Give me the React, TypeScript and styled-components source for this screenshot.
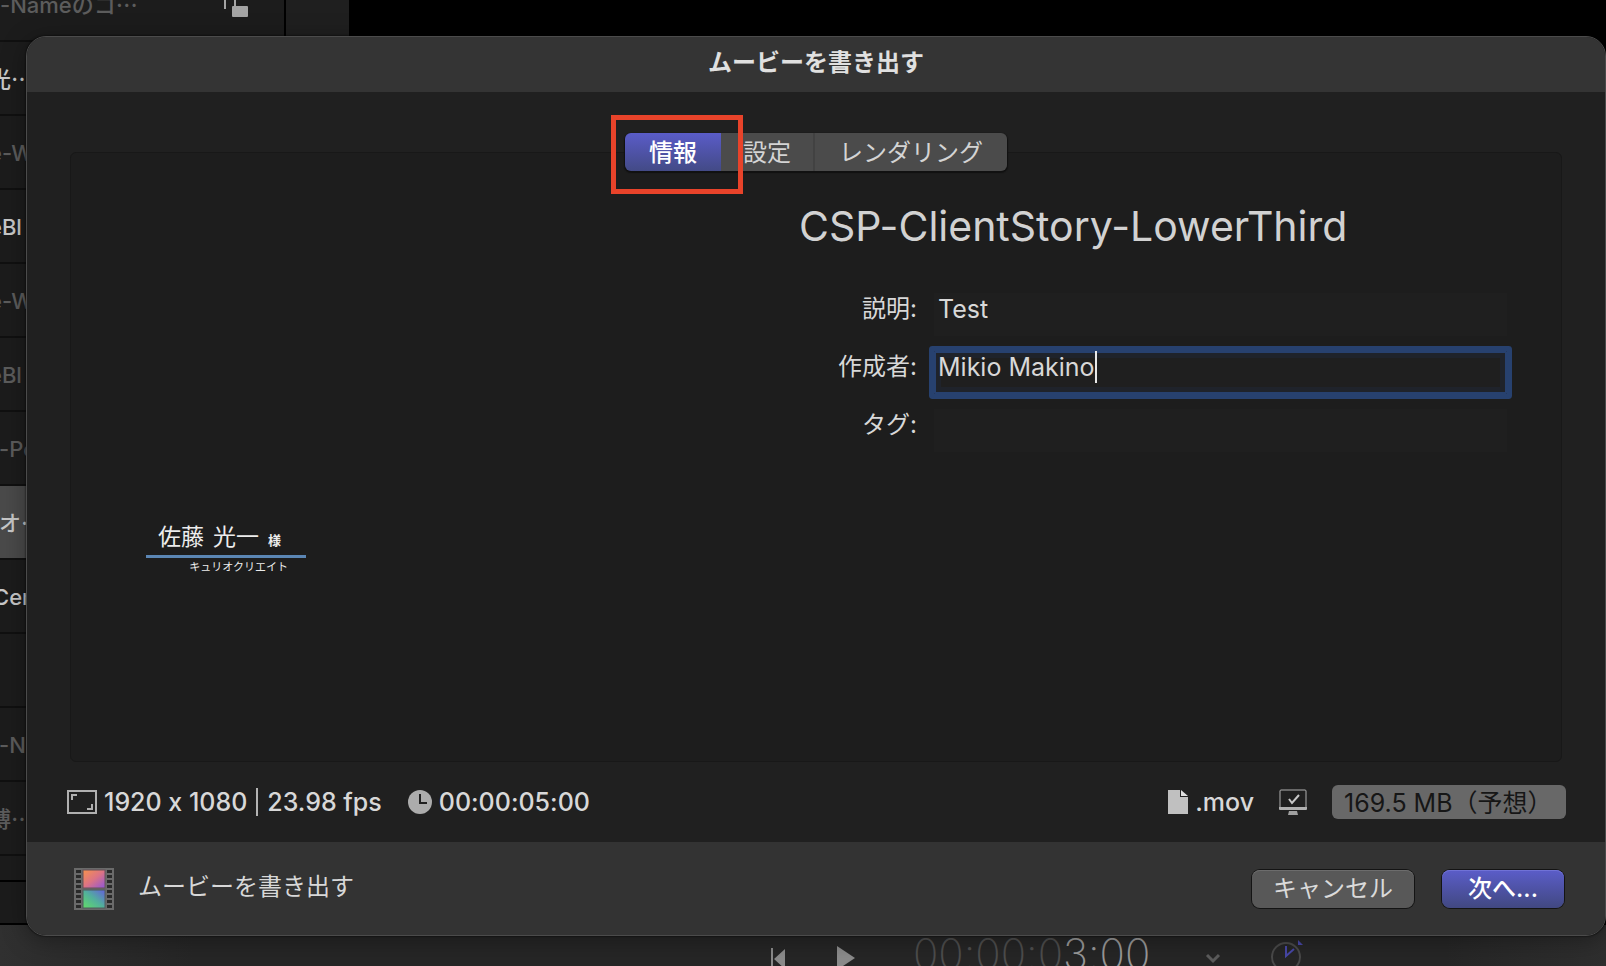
import React from "react";
import styled, { createGlobalStyle, css } from "styled-components";

const GlobalStyle = createGlobalStyle`
  *, *::before, *::after { box-sizing: border-box; }
  body {
    margin: 0;
    background: #000;
    color: #d8d8d8;
    font-family: Inter, "Noto Sans CJK JP", sans-serif;
    font-feature-settings: "calt" 0;
    font-size: 24px;
    line-height: 32px;
  }
  button, input { font: inherit; color: inherit; }
`;

/* ---------- application behind the dialog ---------- */

const Screen = styled.div`
  position: relative;
  display: flex;
  flex-direction: column;
  height: 100vh;
  min-height: 936px;
  overflow: hidden;
`;

const Workspace = styled.div`
  display: flex;
  flex: 1;
  min-height: 0;
  overflow: hidden;
  border-bottom: 2px solid #000;
`;

const LayerList = styled.ul`
  width: 286px;
  margin: -32px 0 0;
  padding: 0;
  list-style: none;
  background: #1c1c1c;
  border-right: 2px solid #000;
  overflow: hidden;
`;

const LayerRow = styled.li<{ $tone: "dim" | "bright" | "selected"; $scroll?: number }>`
  display: flex;
  align-items: center;
  justify-content: space-between;
  height: 74px;
  padding: 2px 36px 0 0;
  border-bottom: 2px solid #101010;
  white-space: nowrap;
  font-size: 22px;
  font-weight: 500;
  color: ${(p) => (p.$tone === "dim" ? "#5c5c5c" : "#c8c8c8")};
  text-indent: -${(p) => p.$scroll ?? 0}px;
  ${(p) => p.$tone === "selected" && css`background: #4a4a4a;`}
`;

const ListFooter = styled.li`
  height: 26px;
  border-bottom: 2px solid #000;
`;

const Gutter = styled.div`
  width: 63px;
  background: #1f1f1f;
`;

const Transport = styled.div`
  display: flex;
  align-items: flex-start;
  flex: 0 0 41px;
  padding: 8px 0 0 770px;
  background: linear-gradient(90deg, #303030, #262626 12%, #262626 90%, #2e2e2e);
  overflow: hidden;
`;

const IconButton = styled.button<{ $gap: number }>`
  display: block;
  margin: 0 ${(p) => p.$gap}px 0 0;
  padding: 0;
  border: 0;
  background: none;
  line-height: 0;
`;

const Timecode = styled.output`
  width: 239px;
  margin-right: 53px;
  font-family: Inter, sans-serif;
  font-size: 42px;
  font-weight: 200;
  line-height: 42px;
  color: #9a9a9a;
  white-space: nowrap;
`;

const Faded = styled.span`
  color: #4e4e4e;
`;

/* ---------- dialog ---------- */

const Dialog = styled.section`
  position: absolute;
  top: 36px;
  left: 26px;
  right: 0;
  border: 1px solid #4b4b4b;
  border-radius: 20px;
  background: #202020;
  box-shadow: 0 0 2px #000, 0 4px 24px rgba(0, 0, 0, 0.35);
  overflow: hidden;
`;

const TitleBar = styled.header`
  display: flex;
  align-items: center;
  justify-content: center;
  height: 55px;
  padding-bottom: 3px;
  background: #343434;
`;

const Title = styled.h1`
  margin: 0;
  font-size: 24px;
  font-weight: 700;
  line-height: 32px;
  color: #e0e0e0;
`;

const Body = styled.div`
  padding: 41px 43px 0;
`;

const TabBar = styled.div`
  position: relative;
  z-index: 1;
  display: flex;
  width: fit-content;
  height: 38px;
  margin: 0 auto;
`;

const Tabs = styled.div`
  display: flex;
  border-radius: 6px;
  box-shadow: 0 1px 1px 1px #111;
  overflow: hidden;
`;

const Tab = styled.button<{ $active?: boolean }>`
  padding: 2px 24px 0;
  border: 0;
  background: ${(p) => (p.$active ? "linear-gradient(#5a5cc8, #434a86)" : "#4b4b4b")};
  color: ${(p) => (p.$active ? "#fff" : "#d4d4d4")};
  font-weight: ${(p) => (p.$active ? 500 : 400)};
  white-space: nowrap;
  &:nth-child(2) {
    padding: 2px 22px 0;
    border-right: 2px solid #424242;
  }
`;

const Marker = styled.div`
  position: absolute;
  top: -18px;
  left: -14px;
  width: 132px;
  height: 79px;
  border: 5px solid #e8432a;
  pointer-events: none;
`;

const Panel = styled.div`
  display: grid;
  grid-template-columns: minmax(0, 1fr) minmax(0, 1fr);
  gap: 20px;
  min-height: 610px;
  margin-top: -19px;
  padding-right: 54px;
  border: 1px solid #181818;
  border-radius: 6px;
  background: #1d1d1d;
`;

const Preview = styled.div`
  padding: 367px 0 0 75px;
`;

const LowerThird = styled.figure`
  width: 160px;
  margin: 0;
  font-family: "Noto Sans CJK JP", sans-serif;
  color: #ececec;
`;

const PersonName = styled.div`
  display: flex;
  align-items: baseline;
  gap: 9px;
  padding-left: 12px;
  border-bottom: 3px solid #5b86b4;
  font-size: 23px;
  line-height: 31px;
  white-space: nowrap;
`;

const Honorific = styled.small`
  font-size: 13px;
  font-weight: 700;
`;

const Company = styled.figcaption`
  padding-right: 18px;
  text-align: right;
  font-size: 11px;
  line-height: 16px;
`;

const Details = styled.form`
  padding-top: 47px;
`;

const ProjectName = styled.h2`
  margin: 0 0 41px;
  font-size: 41px;
  font-weight: 400;
  line-height: 52px;
  color: #d2d2d2;
  white-space: nowrap;
`;

const FieldRow = styled.div`
  display: grid;
  grid-template-columns: 118px minmax(0, 1fr);
  gap: 17px;
  margin-bottom: 15px;
`;

const FieldLabel = styled.label`
  text-align: right;
  white-space: nowrap;
`;

const FieldBox = styled.div<{ $focused?: boolean }>`
  display: flex;
  align-items: flex-start;
  height: 43px;
  padding-left: 4px;
  background: #1f1f1f;
  ${(p) =>
    p.$focused &&
    css`
      border-radius: 1px;
      box-shadow: 0 0 0 5px #27416f, inset 0 0 0 2px #27416f, inset 0 0 0 7px #1f232b;
    `}
`;

const TextInput = styled.input`
  field-sizing: content;
  min-width: 1px;
  height: 32px;
  padding: 0;
  border: 0;
  outline: 0;
  background: none;
  font-size: 25px;
`;

const Caret = styled.span`
  width: 2px;
  height: 32px;
  background: #e8e8e8;
`;

const StatusBar = styled.div`
  display: flex;
  align-items: center;
  justify-content: space-between;
  height: 80px;
  padding: 0 39px 0 40px;
  font-size: 25px;
  font-weight: 500;
  white-space: nowrap;
`;

const StatusGroup = styled.div<{ $gap: number }>`
  display: flex;
  align-items: center;
  gap: ${(p) => p.$gap}px;
`;

const Rule = styled.span`
  width: 2px;
  height: 28px;
  margin: 0 2px;
  background: #b4b4b4;
`;

const SizeBadge = styled.span`
  width: 234px;
  padding: 2px 0 0 12px;
  border-radius: 6px;
  background: #686868;
  color: #161616;
  font-weight: 400;
`;

const Footer = styled.footer`
  display: flex;
  align-items: center;
  height: 93px;
  padding: 1px 41px 0 47px;
  background: #333;
`;

const FooterLabel = styled.span`
  flex: 1;
  margin-left: 24px;
  padding-bottom: 4px;
`;

const PushButton = styled.button<{ $primary?: boolean }>`
  width: ${(p) => (p.$primary ? 122 : 162)}px;
  height: 38px;
  margin-left: ${(p) => (p.$primary ? 28 : 0)}px;
  padding: 0;
  border: 0;
  border-radius: 8px;
  background: ${(p) => (p.$primary ? "linear-gradient(#5b5dc9, #414881)" : "#585858")};
  box-shadow: 0 0 0 1px #141414, inset 0 1px ${(p) => (p.$primary ? "#7072d6" : "#6c6c6c")};
  color: ${(p) => (p.$primary ? "#fff" : "#dadada")};
  font-weight: ${(p) => (p.$primary ? 500 : 400)};
`;

/* ---------- icons ---------- */

const UnlockIcon = () => (
  <svg width="24" height="26" viewBox="0 0 24 26" aria-hidden="true">
    <path d="M1 17V5a5 5 0 0 1 10 0v10" fill="none" stroke="#a4a4a4" strokeWidth="2" />
    <rect x="8" y="14" width="16" height="11" rx="1" fill="#a4a4a4" />
  </svg>
);

const FrameIcon = () => (
  <svg width="30" height="24" viewBox="0 0 30 24" fill="none" stroke="#b0b0b0" strokeWidth="2" aria-hidden="true">
    <rect x="1" y="1" width="28" height="22" />
    <path d="M5 10V5h5M25 14v5h-5" />
  </svg>
);

const ClockIcon = () => (
  <svg width="24" height="24" viewBox="0 0 24 24" aria-hidden="true">
    <circle cx="12" cy="12" r="12" fill="#acacac" />
    <path d="M12 4v9h7" fill="none" stroke="#202020" strokeWidth="2" />
  </svg>
);

const FileIcon = () => (
  <svg width="20" height="24" viewBox="0 0 20 24" aria-hidden="true">
    <path d="M0 0h12v7h8v17H0z" fill="#c0c0c0" />
    <path d="M13 0l7 6h-7z" fill="#e0e0e0" />
  </svg>
);

const MonitorIcon = () => (
  <svg width="28" height="26" viewBox="0 0 28 26" aria-hidden="true">
    <path d="M1 20V2q0-1 1-1h24q1 0 1 1v18" fill="none" stroke="#b0b0b0" />
    <path d="M0 18h28v2q0 1-1 1H1q-1 0-1-1z" fill="#b0b0b0" />
    <path d="M10 22h8l1 4H9z" fill="#a0a0a0" />
    <path d="M10 10l3 4 7-8" fill="none" stroke="#c8c8c8" strokeWidth="2" />
  </svg>
);

const FilmIcon = () => (
  <svg width="40" height="42" viewBox="0 0 40 42" aria-hidden="true">
    <defs>
      <linearGradient id="warm" x1="0" y1="0" x2="1" y2="1">
        <stop offset="0" stopColor="#f6924c" />
        <stop offset="0.5" stopColor="#dc7384" />
        <stop offset="1" stopColor="#8f55d8" />
      </linearGradient>
      <linearGradient id="cool" x1="0" y1="1" x2="1" y2="0">
        <stop offset="0" stopColor="#62dc68" />
        <stop offset="0.5" stopColor="#52b09c" />
        <stop offset="1" stopColor="#6460dc" />
      </linearGradient>
    </defs>
    <rect width="40" height="42" fill="#6a6a6a" />
    {[2, 7, 12, 17, 22, 27, 32, 37].map((y) => (
      <path key={y} d={`M2 ${y}h5v3H2zM33 ${y}h5v3h-5z`} fill="#2a2a2a" />
    ))}
    <rect x="9" y="2" width="22" height="18" fill="url(#warm)" stroke="#665058" />
    <rect x="9" y="22" width="22" height="18" fill="url(#cool)" stroke="#4c5c5c" />
  </svg>
);

const StartIcon = () => (
  <svg width="16" height="36" viewBox="0 0 16 36" aria-hidden="true">
    <path d="M1 15v20h2V15zM15 16v20L4 26z" fill="#8c8c8c" />
  </svg>
);

const PlayIcon = () => (
  <svg width="20" height="38" viewBox="0 0 20 38" aria-hidden="true">
    <path d="M2 13v24L20 25z" fill="#8c8c8c" />
  </svg>
);

const ChevronIcon = () => (
  <svg width="16" height="32" viewBox="0 0 16 32" aria-hidden="true">
    <path d="M2 22l6 6 6-6" fill="none" stroke="#5c5c5c" strokeWidth="3" />
  </svg>
);

const DialIcon = () => (
  <svg width="34" height="40" viewBox="0 0 34 40" fill="none" aria-hidden="true">
    <circle cx="15" cy="24" r="14" stroke="#4a4a4a" strokeWidth="2" />
    <path d="M15 13v10l8-7" stroke="#4848a8" strokeWidth="2" />
    <path d="M27 7l5 5h-5z" fill="#4848a8" />
  </svg>
);

/* ---------- page ---------- */

type Layer = { name: string; tone: "dim" | "bright" | "selected"; scroll?: number; locked?: boolean };

const layers: Layer[] = [
  { name: "-Nameのコ⋯", tone: "dim", locked: true },
  { name: "光⋯", tone: "bright", scroll: 11 },
  { name: "e-W", tone: "dim", scroll: 11 },
  { name: "eBl", tone: "bright", scroll: 11 },
  { name: "e-W", tone: "dim", scroll: 11 },
  { name: "eBl", tone: "dim", scroll: 11 },
  { name: "-Pe", tone: "dim", scroll: 1 },
  { name: "オ⋯", tone: "selected", scroll: 1 },
  { name: "Cer", tone: "bright", scroll: 7 },
  { name: "", tone: "dim" },
  { name: "-N", tone: "dim", scroll: 1 },
  { name: "博⋯", tone: "dim", scroll: 11 },
];

const fields = [
  { id: "description", label: "説明:", value: "Test" },
  { id: "author", label: "作成者:", value: "Mikio Makino", focused: true },
  { id: "tags", label: "タグ:", value: "" },
];

export default function App() {
  return (
    <Screen>
      <GlobalStyle />
      <Workspace>
        <LayerList>
          {layers.map((layer, i) => (
            <LayerRow key={i} $tone={layer.tone} $scroll={layer.scroll}>
              <span>{layer.name}</span>
              {layer.locked && <UnlockIcon />}
            </LayerRow>
          ))}
          <ListFooter />
        </LayerList>
        <Gutter />
      </Workspace>
      <Transport>
        <IconButton $gap={49} aria-label="先頭へ"><StartIcon /></IconButton>
        <IconButton $gap={58} aria-label="再生"><PlayIcon /></IconButton>
        <Timecode><Faded>00:00:0</Faded>3:00</Timecode>
        <IconButton $gap={50} aria-label="表示"><ChevronIcon /></IconButton>
        <IconButton $gap={0} aria-label="タイミング"><DialIcon /></IconButton>
      </Transport>

      <Dialog role="dialog" aria-labelledby="dialog-title">
        <TitleBar>
          <Title id="dialog-title">ムービーを書き出す</Title>
        </TitleBar>
        <Body>
          <TabBar>
            <Tabs role="tablist">
              <Tab role="tab" aria-selected $active>情報</Tab>
              <Tab role="tab">設定</Tab>
              <Tab role="tab">レンダリング</Tab>
            </Tabs>
            <Marker />
          </TabBar>
          <Panel>
            <Preview>
              <LowerThird>
                <PersonName>
                  <span>佐藤</span>
                  <span>光一</span>
                  <Honorific>様</Honorific>
                </PersonName>
                <Company>キュリオクリエイト</Company>
              </LowerThird>
            </Preview>
            <Details>
              <ProjectName>CSP-ClientStory-LowerThird</ProjectName>
              {fields.map((f) => (
                <FieldRow key={f.id}>
                  <FieldLabel htmlFor={f.id}>{f.label}</FieldLabel>
                  <FieldBox $focused={f.focused}>
                    <TextInput id={f.id} defaultValue={f.value} />
                    {f.focused && <Caret />}
                  </FieldBox>
                </FieldRow>
              ))}
            </Details>
          </Panel>
        </Body>
        <StatusBar>
          <StatusGroup $gap={26}>
            <StatusGroup $gap={7}>
              <FrameIcon />
              <span>1920 x 1080</span>
              <Rule />
              <span>23.98 fps</span>
            </StatusGroup>
            <StatusGroup $gap={7}>
              <ClockIcon />
              <span>00:00:05:00</span>
            </StatusGroup>
          </StatusGroup>
          <StatusGroup $gap={25}>
            <StatusGroup $gap={7}>
              <FileIcon />
              <span>.mov</span>
            </StatusGroup>
            <MonitorIcon />
            <SizeBadge>169.5 MB（予想）</SizeBadge>
          </StatusGroup>
        </StatusBar>
        <Footer>
          <FilmIcon />
          <FooterLabel>ムービーを書き出す</FooterLabel>
          <PushButton type="button">キャンセル</PushButton>
          <PushButton type="button" $primary>次へ...</PushButton>
        </Footer>
      </Dialog>
    </Screen>
  );
}
